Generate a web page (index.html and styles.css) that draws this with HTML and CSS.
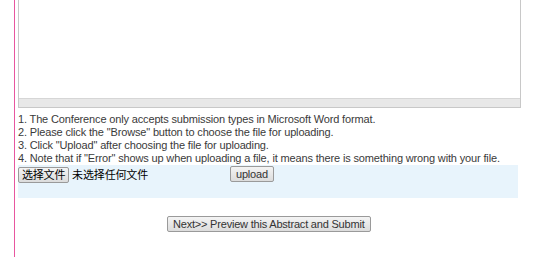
FILE: index.html
```html
<!DOCTYPE html>
<html lang="en">
<head>
    <meta charset="UTF-8">
    <title>Upload Abstract</title>
    <link rel="stylesheet" href="styles.css">
</head>
<body>
    <div class="page">
        <div class="editor">
            <div class="editor-area"></div>
            <div class="editor-bar"></div>
        </div>
        <div class="notes">
            1. The Conference only accepts submission types in Microsoft Word format.<br>
            2. Please click the "Browse" button to choose the file for uploading.<br>
            3. Click "Upload" after choosing the file for uploading.<br>
            4. Note that if "Error" shows up when uploading a file, it means there is something wrong with your file.
        </div>
        <div class="upload-row">
            <span class="file-pick"><button type="button" class="btn">选择文件</button> 未选择任何文件</span>
            <button type="button" class="btn">upload</button>
        </div>
        <div class="submit-row">
            <button type="button" class="btn">Next&gt;&gt; Preview this Abstract and Submit</button>
        </div>
    </div>
</body>
</html>
```

FILE: styles.css
```css
body {
    margin: 0;
    font-family: Arial, "Liberation Sans", "Noto Sans CJK SC", sans-serif;
    font-size: 11px;
    letter-spacing: -0.15px;
    color: #3a3a3a;
    background: #fff;
}
.page {
    margin-left: 14px;
    border-left: 1px solid #e8569f;
    padding-left: 3px;
    width: 503px;
    min-height: 257px;
}
.editor {
    border: 1px solid #c8c8c8;
    border-top: none;
    height: 107px;
    display: flex;
    flex-direction: column;
}
.editor-area {
    flex: 1;
    background: #fff;
}
.editor-bar {
    height: 8px;
    background: #e8e8e8;
    border-top: 1px solid #d6d6d6;
}
.notes {
    margin-top: 5px;
    line-height: 13px;
    white-space: nowrap;
}
.upload-row {
    background: #e8f4fc;
    height: 33px;
    margin-right: 3px;
    display: flex;
    align-items: flex-start;
    padding-top: 1px;
    box-sizing: border-box;
}
.file-pick {
    width: 212px;
    color: #000;
    font-size: 11px;
}
.btn {
    font-family: Arial, "Liberation Sans", "Noto Sans CJK SC", sans-serif;
    font-size: 11px;
    letter-spacing: -0.2px;
    color: #333;
    background: linear-gradient(#f4f4f4, #dcdcdc);
    border: 1px solid #9a9a9a;
    border-radius: 2px;
    padding: 1px 5px;
    height: 16px;
    line-height: 12px;
    margin: 0;
}
.file-pick .btn {
    color: #000;
    padding: 1px 3px;
}
.submit-row {
    padding-top: 18px;
    padding-left: 149px;
}
```
